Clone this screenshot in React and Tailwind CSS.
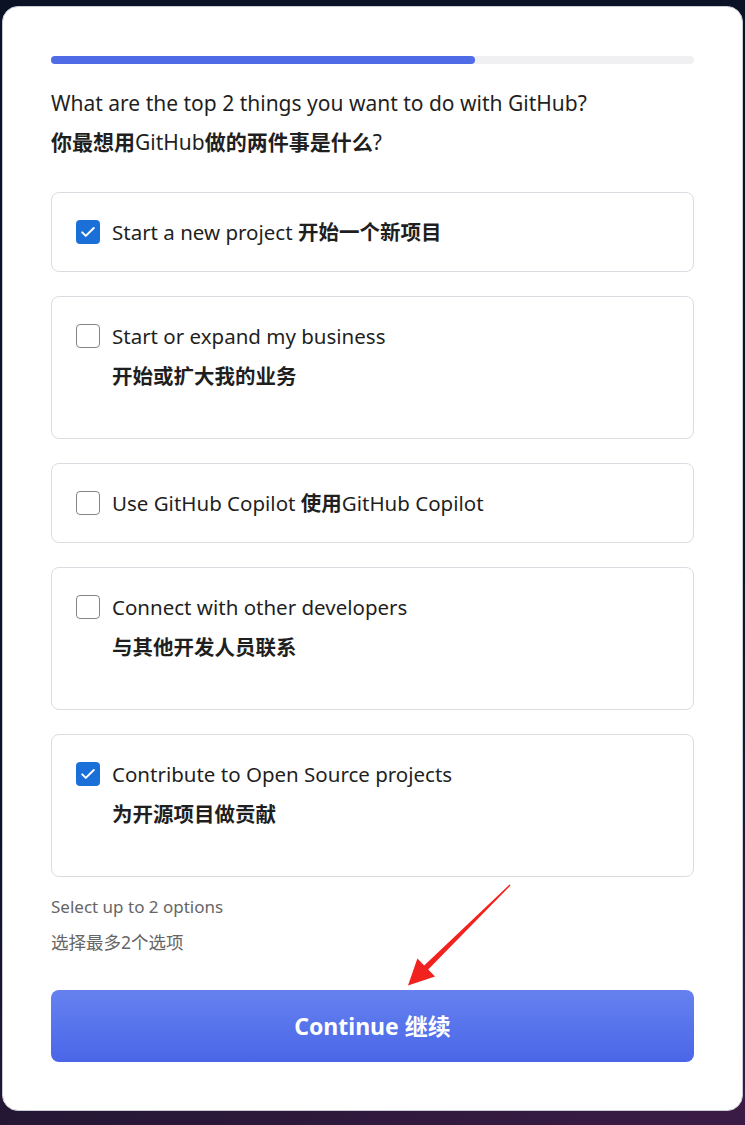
import React, { useState } from "react";

const font = { fontFamily: '"Noto Sans", "Noto Sans CJK SC", sans-serif' };

const Check = ({ checked }) =>
  checked ? (
    <span className="flex h-6 w-6 shrink-0 items-center justify-center rounded-[4px] bg-[#1b6fd8]">
      <svg width="18" height="18" viewBox="0 0 18 18" fill="none">
        <path d="M3.2 9.4l3.6 3.5L14.8 5" stroke="white" strokeWidth="2" strokeLinecap="round" strokeLinejoin="round" />
      </svg>
    </span>
  ) : (
    <span className="h-6 w-6 shrink-0 rounded-[4px] border-[1.5px] border-[#858585] bg-white" />
  );

// cjk parts bold, latin parts regular, same as in the picture
const Zh = ({ parts }) =>
  parts.map((p, i) =>
    /[\u4e00-\u9fff]/.test(p) ? (
      <span key={i} className="font-bold">{p}</span>
    ) : (
      <span key={i}>{p}</span>
    )
  );

const options = [
  { id: 1, en: "Start a new project", zh: ["开始一个新项目"], inline: true },
  { id: 2, en: "Start or expand my business", zh: ["开始或扩大我的业务"] },
  { id: 3, en: "Use GitHub Copilot", zh: ["使用", "GitHub Copilot"], inline: true },
  { id: 4, en: "Connect with other developers", zh: ["与其他开发人员联系"] },
  { id: 5, en: "Contribute to Open Source projects", zh: ["为开源项目做贡献"] },
];

export default function App() {
  const [picked, setPicked] = useState([1, 5]);

  const toggle = id => {
    if (picked.includes(id)) setPicked(picked.filter(x => x !== id));
    else if (picked.length < 2) setPicked([...picked, id]);
  };

  return (
    <div
      className="relative h-[1125px] w-full bg-[linear-gradient(160deg,#0b1226_0%,#0c1326_60%,#2a1838_85%,#3c1c46_100%)] px-[2px] pt-[6px]"
      style={font}
    >
      <div className="h-[1105px] rounded-[16px] border border-[#c9ccd3] bg-white px-[48px] pt-[49px] text-[#1f1f1f]">
        <div className="h-2 w-full rounded-full bg-[#f0f0f2]">
          <div className="h-2 w-[66%] rounded-full bg-[#4f6ce6]" />
        </div>

        <p className="mt-6 text-[21px] leading-[30px]">What are the top 2 things you want to do with GitHub?</p>
        <p className="mt-[9px] text-[21px] leading-[30px]">
          <Zh parts={["你最想用", "GitHub", "做的两件事是什么", "?"]} />
        </p>

        <div className="mt-[35px] flex flex-col gap-6">
          {options.map(o => (
            <div
              key={o.id}
              onClick={() => toggle(o.id)}
              className={
                "flex cursor-pointer items-start gap-3 rounded-[8px] border border-[#d9dde2] px-6 pt-[27px] " +
                (o.inline ? "pb-[27px]" : "pb-[50px]")
              }
            >
              <Check checked={picked.includes(o.id)} />
              <div className="text-[20.5px] leading-6">
                {o.inline ? (
                  <div>
                    {o.en} <Zh parts={o.zh} />
                  </div>
                ) : (
                  <>
                    <div>{o.en}</div>
                    <div className="mt-4">
                      <Zh parts={o.zh} />
                    </div>
                  </>
                )}
              </div>
            </div>
          ))}
        </div>

        <p className="mt-[18px] text-[17px] leading-6 text-[#666]">Select up to 2 options</p>
        <p className="mt-[11px] text-[17.5px] leading-6 text-[#666]">选择最多2个选项</p>

        <button className="mt-9 flex h-[72px] w-full items-center justify-center rounded-[8px] bg-gradient-to-b from-[#6681ef] to-[#4a66e8] text-[23px] font-bold text-white">
          Continue 继续
        </button>
      </div>

      <svg className="absolute left-[400px] top-[880px]" width="120" height="110" viewBox="0 0 120 110">
        <polygon
          points="110.6,5.4 28.2,89.6 35,96.4 8,105.5 17.4,78.4 24.2,85.4 109.6,4.6"
          fill="#f2221e"
        />
      </svg>
    </div>
  );
}
